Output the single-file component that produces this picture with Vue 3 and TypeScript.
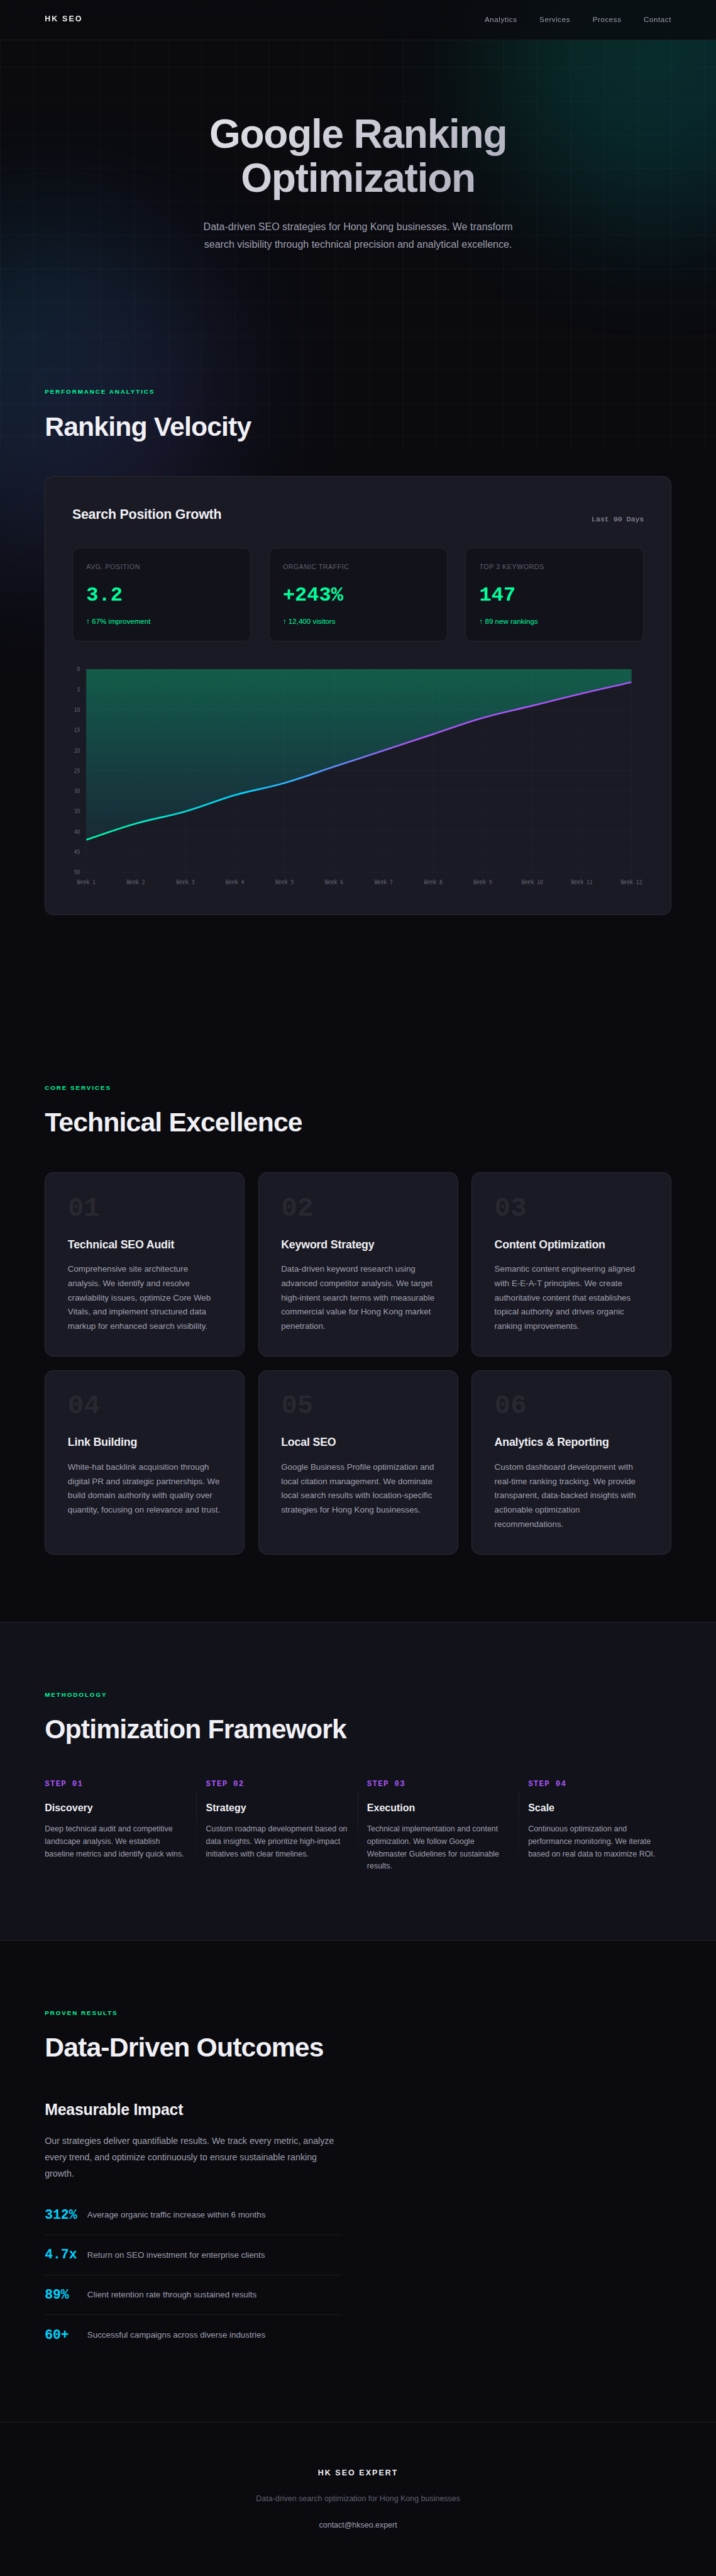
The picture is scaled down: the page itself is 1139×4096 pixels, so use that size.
<script setup lang="ts">
interface Stat { label: string; value: string; change: string }
interface Service { title: string; text: string }
interface Outcome { value: string; text: string }

const links: string[] = ['Analytics', 'Services', 'Process', 'Contact']

const stats: Stat[] = [
  { label: 'Avg. Position', value: '3.2', change: '↑ 67% improvement' },
  { label: 'Organic Traffic', value: '+243%', change: '↑ 12,400 visitors' },
  { label: 'Top 3 Keywords', value: '147', change: '↑ 89 new rankings' },
]

const services: Service[] = [
  { title: 'Technical SEO Audit', text: 'Comprehensive site architecture analysis. We identify and resolve crawlability issues, optimize Core Web Vitals, and implement structured data markup for enhanced search visibility.' },
  { title: 'Keyword Strategy', text: 'Data-driven keyword research using advanced competitor analysis. We target high-intent search terms with measurable commercial value for Hong Kong market penetration.' },
  { title: 'Content Optimization', text: 'Semantic content engineering aligned with E-E-A-T principles. We create authoritative content that establishes topical authority and drives organic ranking improvements.' },
  { title: 'Link Building', text: 'White-hat backlink acquisition through digital PR and strategic partnerships. We build domain authority with quality over quantity, focusing on relevance and trust.' },
  { title: 'Local SEO', text: 'Google Business Profile optimization and local citation management. We dominate local search results with location-specific strategies for Hong Kong businesses.' },
  { title: 'Analytics & Reporting', text: 'Custom dashboard development with real-time ranking tracking. We provide transparent, data-backed insights with actionable optimization recommendations.' },
]

const steps: Service[] = [
  { title: 'Discovery', text: 'Deep technical audit and competitive landscape analysis. We establish baseline metrics and identify quick wins.' },
  { title: 'Strategy', text: 'Custom roadmap development based on data insights. We prioritize high-impact initiatives with clear timelines.' },
  { title: 'Execution', text: 'Technical implementation and content optimization. We follow Google Webmaster Guidelines for sustainable results.' },
  { title: 'Scale', text: 'Continuous optimization and performance monitoring. We iterate based on real data to maximize ROI.' },
]

const outcomes: Outcome[] = [
  { value: '312%', text: 'Average organic traffic increase within 6 months' },
  { value: '4.7x', text: 'Return on SEO investment for enterprise clients' },
  { value: '89%', text: 'Client retention rate through sustained results' },
  { value: '60+', text: 'Successful campaigns across diverse industries' },
]

const pad = (n: number): string => String(n).padStart(2, '0')

// Chart geometry
const positions: number[] = [42, 38, 35, 31, 28, 24, 20, 16, 12, 9, 6, 3.2]
const left = 25
const right = 999.5
const top = 9
const bottom = 372
const xAt = (i: number): number => left + (i * (right - left)) / (positions.length - 1)
const yAt = (v: number): number => top + (v * (bottom - top)) / 50
const yTicks: number[] = Array.from({ length: 11 }, (_, i) => i * 5)

interface Point { x: number; y: number }

// Smooth cubic segments, tension split by the neighbouring segment lengths
function curve(values: number[], tension: number): string {
  const p: Point[] = values.map((v, i) => ({ x: xAt(i), y: yAt(v) }))
  const dist = (a: Point, b: Point): number => Math.hypot(b.x - a.x, b.y - a.y)
  const ctrl = p.map((cur, i) => {
    const prev = p[Math.max(i - 1, 0)]
    const next = p[Math.min(i + 1, p.length - 1)]
    const d1 = dist(prev, cur)
    const d2 = dist(cur, next)
    const a = (tension * d1) / (d1 + d2)
    const b = (tension * d2) / (d1 + d2)
    return {
      before: { x: cur.x - a * (next.x - prev.x), y: cur.y - a * (next.y - prev.y) },
      after: { x: cur.x + b * (next.x - prev.x), y: cur.y + b * (next.y - prev.y) },
    }
  })
  let d = `M${p[0].x},${p[0].y}`
  for (let i = 1; i < p.length; i++) {
    const c1 = ctrl[i - 1].after
    const c2 = ctrl[i].before
    d += `C${c1.x},${c1.y} ${c2.x},${c2.y} ${p[i].x},${p[i].y}`
  }
  return d
}

const linePath = curve(positions, 0.4)
const areaPath = `${linePath}L${right},${top}L${left},${top}Z`
</script>

<template>
  <div class="page">
    <div class="glow glow-a"></div>
    <div class="glow glow-b"></div>
    <div class="grid-lines"></div>

    <nav class="nav">
      <div class="logo">HK SEO</div>
      <div class="links">
        <a v-for="l in links" :key="l">{{ l }}</a>
      </div>
    </nav>

    <main class="content">
      <header class="hero">
        <h1>Google Ranking Optimization</h1>
        <p>Data-driven SEO strategies for Hong Kong businesses. We transform search visibility through technical precision and analytical excellence.</p>
      </header>

      <section class="section analytics">
        <div class="eyebrow">Performance Analytics</div>
        <h2>Ranking Velocity</h2>
        <div class="panel">
          <div class="panel-head">
            <h3>Search Position Growth</h3>
            <span class="period">Last 90 Days</span>
          </div>
          <div class="stats">
            <div v-for="s in stats" :key="s.label" class="stat">
              <div class="stat-label">{{ s.label }}</div>
              <div class="stat-value">{{ s.value }}</div>
              <div class="stat-change">{{ s.change }}</div>
            </div>
          </div>
          <svg class="chart" width="1022" height="400" viewBox="0 0 1022 400">
            <defs>
              <linearGradient id="stroke" gradientUnits="userSpaceOnUse" x1="0" y1="0" x2="600" y2="0">
                <stop offset="0" stop-color="#00ff9d" />
                <stop offset="0.5" stop-color="#00d4ff" />
                <stop offset="1" stop-color="#a855f7" />
              </linearGradient>
              <linearGradient id="fill" gradientUnits="userSpaceOnUse" x1="0" y1="0" x2="0" y2="400">
                <stop offset="0" stop-color="#00ff9d" stop-opacity="0.3" />
                <stop offset="1" stop-color="#00d4ff" stop-opacity="0.02" />
              </linearGradient>
              <clipPath id="plot">
                <rect :x="left" :y="top" :width="right - left" :height="bottom - top" />
              </clipPath>
            </defs>
            <g class="rules">
              <line v-for="t in yTicks" :key="'h' + t" :x1="left - 8" :x2="right" :y1="yAt(t)" :y2="yAt(t)" />
              <line v-for="(_, i) in positions" :key="'v' + i" :x1="xAt(i)" :x2="xAt(i)" :y1="top" :y2="bottom + 8" />
            </g>
            <path :d="areaPath" fill="url(#fill)" />
            <path :d="linePath" fill="none" stroke="url(#stroke)" stroke-width="3" clip-path="url(#plot)" />
            <g class="ticks">
              <text v-for="t in yTicks" :key="'y' + t" :x="left - 11" :y="yAt(t) + 3.7" text-anchor="end">{{ t }}</text>
              <text v-for="(_, i) in positions" :key="'x' + i" :x="xAt(i)" y="393.7" text-anchor="middle">Week {{ i + 1 }}</text>
            </g>
          </svg>
        </div>
      </section>

      <section class="section services">
        <div class="eyebrow">Core Services</div>
        <h2>Technical Excellence</h2>
        <div class="cards">
          <article v-for="(s, i) in services" :key="s.title" class="card">
            <div class="card-no">{{ pad(i + 1) }}</div>
            <h3>{{ s.title }}</h3>
            <p>{{ s.text }}</p>
          </article>
        </div>
      </section>

      <section class="method">
        <div class="section">
          <div class="eyebrow">Methodology</div>
          <h2>Optimization Framework</h2>
          <div class="steps">
            <div v-for="(s, i) in steps" :key="s.title" class="step">
              <div class="step-no">STEP {{ pad(i + 1) }}</div>
              <h4>{{ s.title }}</h4>
              <p>{{ s.text }}</p>
            </div>
          </div>
        </div>
      </section>

      <section class="section">
        <div class="eyebrow">Proven Results</div>
        <h2>Data-Driven Outcomes</h2>
        <div class="results">
          <div>
            <h3>Measurable Impact</h3>
            <p>Our strategies deliver quantifiable results. We track every metric, analyze every trend, and optimize continuously to ensure sustainable ranking growth.</p>
            <ul>
              <li v-for="o in outcomes" :key="o.value">
                <span class="num">{{ o.value }}</span>
                <span class="desc">{{ o.text }}</span>
              </li>
            </ul>
          </div>
        </div>
      </section>
    </main>

    <footer class="footer">
      <div class="footer-brand">HK SEO EXPERT</div>
      <p>Data-driven search optimization for Hong Kong businesses</p>
      <a>contact@hkseo.expert</a>
    </footer>
  </div>
</template>

<style>
html,
body {
  margin: 0;
  background: #0a0a0f;
  overflow: hidden;
}
</style>

<style scoped>
* {
  box-sizing: border-box;
  margin: 0;
  padding: 0;
}

.page {
  position: relative;
  width: 1280px;
  height: 4602.2px;
  zoom: 0.89;
  overflow: hidden;
  background: #0a0a0f;
  color: #f0f0f5;
  font-family: "Liberation Sans", Arial, sans-serif;
  line-height: 1.6;
}

.glow {
  position: absolute;
  width: 600px;
  height: 600px;
  border-radius: 50%;
  filter: blur(120px);
  opacity: 0.15;
}
.glow-a {
  top: -200px;
  right: -200px;
  background: linear-gradient(135deg, #00ff9d, #00d4ff);
}
.glow-b {
  top: 400px;
  left: -200px;
  background: linear-gradient(135deg, #00d4ff, #a855f7);
}

.grid-lines {
  position: absolute;
  top: 0;
  left: 0;
  width: 100%;
  height: 800px;
  background-image:
    linear-gradient(rgba(255, 255, 255, 0.03) 1px, transparent 1px),
    linear-gradient(90deg, rgba(255, 255, 255, 0.03) 1px, transparent 1px);
  background-size: 60px 60px;
}

.nav {
  position: absolute;
  z-index: 2;
  top: 0;
  left: 0;
  width: 100%;
  height: 71.4px;
  padding: 24px 80px;
  display: flex;
  justify-content: space-between;
  align-items: center;
  background: rgba(10, 10, 15, 0.8);
  backdrop-filter: blur(20px);
  border-bottom: 1px solid rgba(255, 255, 255, 0.08);
}
.logo {
  font-size: 14px;
  font-weight: 700;
  letter-spacing: 0.17em;
}
.links {
  display: flex;
  gap: 40px;
  font-size: 13px;
  letter-spacing: 0.05em;
  color: #a0a0b0;
}

.content {
  position: relative;
}

.hero {
  padding: 200px 80px 120px;
  text-align: center;
}
h1 {
  max-width: 900px;
  padding: 0 150px;
  margin: 0 auto 32px;
  font-size: 72px;
  line-height: 1.1;
  letter-spacing: -0.02em;
  background: linear-gradient(135deg, #f0f0f5 0%, #a0a0b0 100%);
  -webkit-background-clip: text;
  background-clip: text;
  color: transparent;
}
.hero p {
  max-width: 600px;
  margin: 0 auto;
  font-size: 18px;
  line-height: 1.7;
  color: #a0a0b0;
}

.section {
  padding: 120px 80px;
}
.analytics {
  margin-bottom: 60px;
}
.eyebrow {
  margin-bottom: 24px;
  font-size: 11px;
  font-weight: 700;
  letter-spacing: 0.2em;
  text-transform: uppercase;
  color: #00ff9d;
}
h2 {
  margin-bottom: 60px;
  font-size: 48px;
  line-height: 1.2;
  letter-spacing: -0.02em;
}

.panel {
  padding: 48px;
  background: #1a1a24;
  border: 1px solid rgba(255, 255, 255, 0.08);
  border-radius: 16px;
}
.panel-head {
  display: flex;
  justify-content: space-between;
  align-items: flex-end;
  margin-bottom: 40px;
}
.panel-head h3 {
  font-size: 24px;
  letter-spacing: -0.01em;
}
.period {
  font-family: "Liberation Mono", monospace;
  font-size: 13px;
  color: #a0a0b0;
}
.stats {
  display: grid;
  grid-template-columns: repeat(3, 1fr);
  gap: 32px;
  margin-bottom: 40px;
}
.stat {
  padding: 24px;
  background: #12121a;
  border: 1px solid rgba(255, 255, 255, 0.08);
  border-radius: 12px;
}
.stat-label {
  margin-bottom: 12px;
  font-size: 12px;
  letter-spacing: 0.05em;
  text-transform: uppercase;
  color: #606070;
}
.stat-value {
  margin-bottom: 8px;
  font-family: "Liberation Mono", monospace;
  font-size: 36px;
  font-weight: 700;
  color: #00ff9d;
}
.stat-change {
  font-size: 13px;
  color: #00ff9d;
}
.chart {
  display: block;
  overflow: visible;
}
.rules line {
  stroke: rgba(255, 255, 255, 0.04);
  stroke-width: 1;
}
.ticks text {
  font-family: "Noto Sans Mono CJK SC", "Noto Sans Mono CJK JP", monospace;
  font-size: 11px;
  fill: #606070;
}

.cards {
  display: grid;
  grid-template-columns: repeat(3, 1fr);
  gap: 24px;
}
.card {
  padding: 40px;
  background: #1a1a24;
  border: 1px solid rgba(255, 255, 255, 0.08);
  border-radius: 16px;
}
.card-no {
  margin-bottom: 24px;
  font-family: "Liberation Mono", monospace;
  font-size: 48px;
  font-weight: 700;
  line-height: 1;
  color: rgba(255, 255, 255, 0.08);
}
.card h3 {
  margin-bottom: 16px;
  font-size: 20px;
  letter-spacing: -0.01em;
}
.card p {
  font-size: 15px;
  line-height: 1.7;
  color: #a0a0b0;
}

.method {
  background: #12121a;
  border-top: 1px solid rgba(255, 255, 255, 0.08);
  border-bottom: 1px solid rgba(255, 255, 255, 0.08);
}
.steps {
  display: grid;
  grid-template-columns: repeat(4, 1fr);
  gap: 32px;
}
.step {
  position: relative;
}
.step:not(:last-child)::after {
  content: "";
  position: absolute;
  top: 24px;
  right: -16px;
  bottom: 0;
  width: 1px;
  background: linear-gradient(to bottom, rgba(255, 255, 255, 0.08), transparent);
}
.step-no {
  margin-bottom: 16px;
  font-family: "Liberation Mono", monospace;
  font-size: 14px;
  font-weight: 700;
  letter-spacing: 0.1em;
  color: #a855f7;
}
.step h4 {
  margin-bottom: 12px;
  font-size: 18px;
}
.step p {
  font-size: 14px;
  color: #a0a0b0;
}

.results {
  display: grid;
  grid-template-columns: 1fr 1fr;
  gap: 60px;
}
.results h3 {
  margin-bottom: 20px;
  font-size: 28px;
  letter-spacing: -0.01em;
}
.results p {
  margin-bottom: 24px;
  font-size: 16px;
  line-height: 1.8;
  color: #a0a0b0;
}
.results ul {
  list-style: none;
}
.results li {
  display: flex;
  align-items: center;
  gap: 16px;
  padding: 16px 0;
  border-bottom: 1px solid rgba(255, 255, 255, 0.08);
}
.results li:last-child {
  border-bottom: 0;
}
.num {
  min-width: 60px;
  font-family: "Liberation Mono", monospace;
  font-size: 24px;
  font-weight: 700;
  color: #00d4ff;
}
.desc {
  font-size: 15px;
  color: #a0a0b0;
}

.footer {
  position: relative;
  display: flex;
  flex-direction: column;
  align-items: center;
  gap: 24px;
  padding: 80px;
  border-top: 1px solid rgba(255, 255, 255, 0.08);
  font-size: 14px;
}
.footer-brand {
  font-weight: 700;
  letter-spacing: 0.165em;
}
.footer p {
  color: #606070;
}
.footer a {
  color: #a0a0b0;
}
</style>
